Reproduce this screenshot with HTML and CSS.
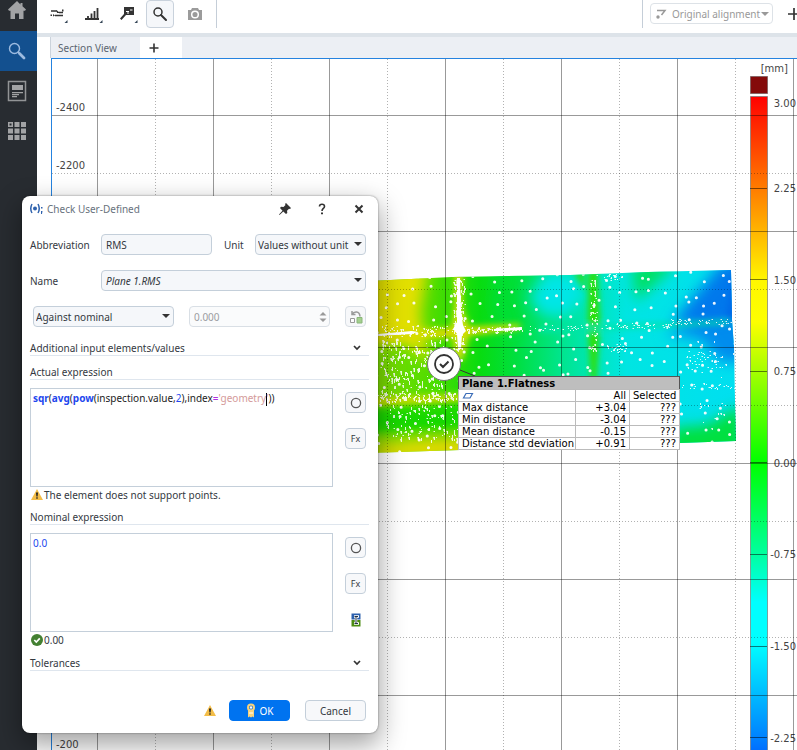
FILE: index.html
```html
<!DOCTYPE html>
<html lang="en">
<head>
<meta charset="utf-8">
<title>Section View</title>
<link rel="stylesheet" href="styles.css">
</head>
<body>
<div class="app">
  <nav class="rail" aria-label="Workspaces">
    <button class="rail-item rail-home" aria-label="Home"><svg width="20" height="20" viewBox="0 0 20 20"><path d="M10 1 1 9.500l1 1.200h1.500V19H8v-5.500h4V19h4.500v-8.300H18l1-1.200-3.500-3.300V3h-2v1.500z" fill="#a2a3a5"/></svg></button>
    <button class="rail-item rail-active" aria-label="Inspect"><svg width="18" height="18" viewBox="0 0 18 18" fill="none" stroke="#9dbbe0"><circle cx="6.500" cy="6.500" r="5" stroke-width="1.400"/><path d="m10 10 1.500 1.500" stroke-width="1.500"/><path d="m11.500 11.500 4.500 4.500" stroke-width="2.800" stroke-linecap="round"/></svg></button>
    <button class="rail-item" aria-label="Report"><svg width="20" height="22" viewBox="0 0 20 22"><path d="M1.500 1.500h17v19h-17z" fill="none" stroke="#929496" stroke-width="1.500"/><path d="M5 5h11v5H5zM5 12h11v1.200H5zM5 14h7v1.200H5zM5 16h5v1.200H5z" fill="#a2a3a5"/></svg></button>
    <button class="rail-item" aria-label="All apps"><svg width="20" height="20" viewBox="0 0 20 20" fill="#a2a3a5"><path d="M1 1h5v5H1zM7.500 1h5v5h-5zM14 1h5v5h-5zM1 7.500h5v5H1zM7.500 7.500h5v5h-5zM14 7.500h5v5h-5zM1 14h5v5H1zM7.500 14h5v5h-5zM14 14h5v5h-5z"/><path d="M2.500 2.500h2v2h-2z" fill="#282c31"/></svg></button>
  </nav>
  <main class="main">
    <header class="toolbar">
      <button class="tool" aria-label="Sections"><svg width="20" height="20" viewBox="0 0 20 20"><path d="M3 7h6M11 8.500h4M7 11.500h8" fill="none" stroke="#333" stroke-width="1.500"/><path d="M8.500 6l3.500 3h-3zM5 10l2 1.500-2 1z" fill="#333"/><path d="M2.500 10.500H4V12H2.500zM14 5.500h1.500v2H14z" fill="#333"/><path d="M19.500 16v3h-3z" fill="#345"/></svg></button>
      <button class="tool" aria-label="Levels"><svg width="20" height="20" viewBox="0 0 20 20"><path d="M2 15h14M5 15v-3M8.500 15V9.500M11.500 15V7M14.500 15V4" fill="none" stroke="#333" stroke-width="1.800"/><path d="M19.500 16v3h-3z" fill="#345"/></svg></button>
      <button class="tool" aria-label="Labels"><svg width="20" height="20" viewBox="0 0 20 20"><path d="M6 3h10v8H8l-4.500 5-1.500-1.500 4-4.500z" fill="#333"/><path d="M8 7.500h3M12 6h2.500M9 9h2" stroke="#fff"/><path d="M19.500 16v3h-3z" fill="#345"/></svg></button>
      <button class="tool tool-on" aria-label="Probe"><svg width="16" height="16" viewBox="0 0 16 16" fill="none" stroke="#333"><circle cx="6" cy="6" r="4" stroke-width="1.500"/><path d="m9 9 5 5" stroke-width="2" stroke-linecap="round"/></svg></button>
      <button class="tool tool-camera" aria-label="Snapshot"><svg width="16" height="14" viewBox="0 0 16 14"><path d="M1 3h3l1-2h6l1 2h3v10H1z" fill="#9b9b9b"/><circle cx="8" cy="7.500" r="3.300" fill="#9b9b9b" stroke="#fff" stroke-width="1.500"/></svg></button>
      <span class="rule"></span>
      <span class="spacer"></span>
      <span class="rule"></span>
      <label class="align"><svg width="12" height="12" viewBox="0 0 12 12"><path d="M2 2.500h8L6.500 7" fill="none" stroke="#999" stroke-width="1.500"/><circle cx="3" cy="9" r="1.700" fill="#999"/></svg><select class="align-select" aria-label="Alignment" disabled><option>Original alignment</option></select></label>
      <button class="add" aria-label="Add alignment"><svg width="12" height="12" viewBox="0 0 12 12"><path d="M6 0v12M0 6h12" stroke="#333" stroke-width="1.700"/></svg></button>
    </header>
    <div class="tabs">
      <button class="tab">Section View</button>
      <button class="tab tab-new" aria-label="New tab"><svg width="10" height="10" viewBox="0 0 10 10"><path d="M5 .500v9M.500 5h9" stroke="#333" stroke-width="1.600"/></svg></button>
    </div>
    <section class="view">
      <svg class="plot" width="100%" height="100%">
        <defs>
          <linearGradient id="scale" x1="0" y1="96" x2="0" y2="780" gradientUnits="userSpaceOnUse">
            <stop offset="0" stop-color="#f00"/><stop offset=".135" stop-color="#ff7c00"/><stop offset=".27" stop-color="#fff700"/><stop offset=".33" stop-color="#fdff00"/><stop offset=".44" stop-color="#78ff00"/><stop offset=".536" stop-color="#0f0"/><stop offset=".67" stop-color="#00ffa0"/><stop offset=".74" stop-color="#0ff"/><stop offset=".8" stop-color="#0ff"/><stop offset=".94" stop-color="#0080ff"/><stop offset="1" stop-color="#0040ff"/>
          </linearGradient>
          <linearGradient id="field" x1="370" x2="736" y1="0" y2="0" gradientUnits="userSpaceOnUse">
            <stop offset="0" stop-color="#86dc00"/><stop offset=".18" stop-color="#4add00"/><stop offset=".3" stop-color="#08dc10"/><stop offset=".4" stop-color="#00df40"/><stop offset=".52" stop-color="#00e58c"/><stop offset=".63" stop-color="#00e6c2"/><stop offset=".7" stop-color="#00e5e2"/><stop offset="1" stop-color="#00dff0"/>
          </linearGradient>
          <filter id="soft" x="-50%" y="-50%" width="200%" height="200%"><feGaussianBlur stdDeviation="7"/></filter>
          <filter id="fine" x="-100%" y="-50%" width="300%" height="200%"><feGaussianBlur stdDeviation="3"/></filter>
          <clipPath id="sheet"><path d="M370 281 452 277 570 275 648 272 731 270 732 320 734 347 735 400 736 441 680 443 560 447 460 450 370 453z"/></clipPath>
        </defs>
        <g transform="translate(-52 -59)">
          <g clip-path="url(#sheet)">
            <path d="M370 260h370v200H370z" fill="url(#field)"/>
            <g filter="url(#soft)">
              <path d="M360 265h68l-8 50 10 50-25-22-45 0z" fill="#e2e000"/>
              <path d="M365 405h95v30h-95z" fill="#14d800"/>
              <path d="M375 446l50-6 50-2v20H375z" fill="#f0d800"/>
              <path d="M545 272h25l18 20-20 24-25 0-14-18z" fill="#00e6e6"/>
              <path d="M500 265h18l-6 35 12 26-16 10-14-30z" fill="#00de30"/>
              <path d="M632 262h46l-42 40z" fill="#00e060"/>
              <path d="M745 262h-22l-52 62 24 0h60z" fill="#0078ec"/>
              <path d="M745 322h-35l-48 12 40 6 18 22h30z" fill="#008cee"/>
              <path d="M672 428l35-3 35-20v60h-72z" fill="#00e040"/>
            </g>
            <g filter="url(#fine)">
              <path d="M735 268h10v52h-20z" fill="#006ae8"/>
              <path d="M454 270h9v40l8 20-8 30h-8l-4-30 3-25z" fill="#c8e010"/>
              <path d="M365 333l95-6 60-3v5l-60 8-95 5z" fill="#d8dc00"/>
              <path d="M365 398l100-4v7l-100 5z" fill="#d4dc00"/>
              <path d="M575 272h8l2 20zM589 270h8l3 52-4 60h-5l-3-58z" fill="#30df00"/>
              <path d="M540 326h50l140-6v4l-190 9z" fill="#00e4a8"/>
            </g>
            <g fill="#fff">
              <path d="M457 278h3l1 33 2 14 3 6-4 4-1 14h-3l-1-15-4-5 4-7z"/>
              <path d="M378 334l34-3 6 1-6 2-34 2zM494 329l28-2v3l-28 1z"/>
            </g>
            <path id="speckle" fill="#fff" fill-opacity=".85"/>
            <path id="dots" fill="none" stroke="#fff" stroke-width="3" stroke-linecap="round" stroke-opacity=".92"/>
          </g>
        </g>
        <svg x="100%" overflow="visible"><g transform="translate(-797 -59)">
          <path d="M750.500 76.500h17v17h-17z" fill="#840a0a" stroke="#866"/>
          <path d="M750.500 96.500h17V1200h-17z" fill="url(#scale)" stroke="#777" stroke-opacity=".7"/>
          <path d="M750 188.500h17M750 279.500h17M750 371.500h17M750 462.500h17M750 554.500h17M750 646.500h17M750 737.500h17" stroke="#000" stroke-opacity=".5"/>
          <g class="axis" text-anchor="end">
            <text x="788" y="72">[mm]</text>
            <text x="796" y="107">3.00</text><text x="796" y="192">2.25</text><text x="796" y="284">1.50</text><text x="796" y="375">0.75</text><text x="796" y="467">0.00</text><text x="796" y="558">-0.75</text><text x="796" y="650">-1.50</text><text x="796" y="742">-2.25</text>
          </g>
        </g></svg>
        <g transform="translate(-52 -59)">
          <path id="major" stroke="#000" stroke-opacity=".4" fill="none"/>
          <path id="minor" stroke="#000" stroke-opacity=".3" stroke-dasharray="1 2" fill="none"/>
          <g class="axis"><text x="56" y="111">-2400</text><text x="56" y="169">-2200</text><text x="56" y="748">-200</text></g>
          <path d="M460 370 475 376" stroke="#333"/>
          <circle cx="444" cy="364" r="16.500" fill="#fff" stroke="#777"/>
          <circle cx="444" cy="364" r="9" fill="none" stroke="#333" stroke-width="1.800"/>
          <path d="m440 364 3 3 5.500-5.500" fill="none" stroke="#333" stroke-width="2"/>
        </g>
      </svg>
      <table class="flat">
        <colgroup><col class="col-name"><col class="col-all"><col></colgroup>
        <thead>
          <tr><th class="flat-title" colspan="3">Plane 1.Flatness</th></tr>
          <tr><td><svg width="12" height="8" viewBox="0 0 12 8"><path d="M4 1.500h6.500L8 6H1.500z" fill="none" stroke="#3b6db8" stroke-width="1.200"/></svg></td><td>All</td><td>Selected</td></tr>
        </thead>
        <tbody>
          <tr><td>Max distance</td><td>+3.04</td><td>???</td></tr>
          <tr><td>Min distance</td><td>-3.04</td><td>???</td></tr>
          <tr><td>Mean distance</td><td>-0.15</td><td>???</td></tr>
          <tr><td>Distance std deviation</td><td>+0.91</td><td>???</td></tr>
        </tbody>
      </table>
    </section>
  </main>
</div>

<form class="dialog" role="dialog" aria-labelledby="dlg-title">
  <header class="dlg-head">
    <svg width="14" height="12" viewBox="0 0 14 12"><path d="M3 1Q.500 5.500 3 10M9 1q2.500 4.500 0 9" fill="none" stroke="#2f62ad" stroke-width="1.500"/><circle cx="6" cy="5.500" r="2" fill="#2f62ad"/><path d="M12 4h1.500v1.500H12zM12 8h1.500l-.5 3h-1z" fill="#2f62ad"/></svg>
    <h1 class="dlg-title" id="dlg-title">Check User-Defined</h1>
    <button class="head-btn" type="button" aria-label="Pin"><svg width="14" height="14" viewBox="0 0 14 14"><path d="M8 1l5 5-1 1-1-.3-2 2 .3 2.300L8 12 5.300 9.500 1.500 13 1 12.500 4.500 8.700 2 6l1-1.300 2.500.3 2-2L7 2z" fill="#333"/></svg></button>
    <button class="head-btn" type="button" aria-label="Help"><svg width="10" height="12" viewBox="0 0 10 12"><path d="M2.500 3.500C2.500.500 7.500.500 7.500 3.500 7.500 5.500 5 5.500 5 8" fill="none" stroke="#333" stroke-width="1.600"/><path d="M4 9.500h2v1.800H4z" fill="#333"/></svg></button>
    <button class="head-btn" type="button" aria-label="Close"><svg width="10" height="10" viewBox="0 0 10 10"><path d="m1.500 1.500 7 7m0-7-7 7" stroke="#333" stroke-width="2"/></svg></button>
  </header>

  <div class="row">
    <label class="lead" for="abbr">Abbreviation</label>
    <input class="field abbr" id="abbr" value="RMS">
    <label class="unit-label" for="unit">Unit</label>
    <span class="pick grow"><select class="field tight" id="unit"><option>Values without unit</option></select></span>
  </div>
  <div class="row">
    <label class="lead" for="name">Name</label>
    <span class="pick grow"><select class="field name" id="name"><option>Plane 1.RMS</option></select></span>
  </div>
  <div class="row row-nominal">
    <span class="pick mode"><select class="field tight" aria-label="Comparison"><option>Against nominal</option></select></span>
    <span class="spin grow"><input class="field" aria-label="Nominal value" value="0.000" disabled><svg class="spin-arrows" width="8" height="12" viewBox="0 0 8 12"><path d="M4 1l3.500 3.500h-7zM4 11 .5 7.500h7z" fill="#999"/></svg></span>
    <button class="square faint" type="button" aria-label="Swap"><svg width="14" height="14" viewBox="0 0 14 14"><path d="M3 1v3.500h3.500M3 4.500C5 1 10.500 .500 11 6.500" fill="none" stroke="#999" stroke-width="1.500"/><path d="M1.500 8.500h4v4h-4z" fill="#fff" stroke="#999"/><path d="M8 7.500h5v5.500H8z" fill="#a4d08e" stroke="#8ab67a"/></svg></button>
  </div>

  <button class="fold fold-extra" type="button"><span>Additional input elements/values</span><svg width="8" height="6" viewBox="0 0 8 6"><path d="m1 1 3 3 3-3" fill="none" stroke="#333" stroke-width="1.700"/></svg></button>

  <h2 class="heading" id="actual-h">Actual expression</h2>
  <div class="expr">
    <div class="code" contenteditable="true" role="textbox" aria-multiline="true" aria-labelledby="actual-h" spellcheck="false"><b class="fn">sqr</b>(<b class="fn">avg</b>(<b class="fn">pow</b>(inspection.value,<span class="num">2</span>),index<span class="op">=</span><span class="str">'geometry<span class="caret"></span>'</span>))</div>
    <div class="side">
      <button class="square" type="button" aria-label="Element"><svg width="12" height="12" viewBox="0 0 12 12"><circle cx="6" cy="6" r="4.600" fill="none" stroke="#555" stroke-width="1.300"/></svg></button>
      <button class="square fx" type="button">Fx</button>
    </div>
  </div>
  <p class="note"><svg width="12" height="11" viewBox="0 0 12 11"><path d="M6 0l6 11H0z" fill="#f3bd48"/><path d="M5 3.500h2L6.600 7.500H5.400zM5.300 8.300h1.400v1.400H5.300z" fill="#222"/></svg>The element does not support points.</p>

  <h2 class="heading" id="nominal-h">Nominal expression</h2>
  <div class="expr">
    <textarea class="code num" aria-labelledby="nominal-h">0.0</textarea>
    <div class="side">
      <button class="square" type="button" aria-label="Element"><svg width="12" height="12" viewBox="0 0 12 12"><circle cx="6" cy="6" r="4.600" fill="none" stroke="#555" stroke-width="1.300"/></svg></button>
      <button class="square fx" type="button">Fx</button>
      <button class="square bare" type="button" aria-label="Link nominal and actual"><svg width="10" height="14" viewBox="0 0 10 14"><path d="M.500.500h9v6h-9z" fill="#2c61ad"/><path d="M.500 7h9v6.500h-9z" fill="#4c8c12"/><path d="M3 3.500h5M5 3.500v7M3 10.500h5" stroke="#fff" stroke-width="2.500"/><path d="M3.500 3.500h3.500M5 3.500v7M3.500 10.500h3.500" stroke="#234"/></svg></button>
    </div>
  </div>
  <p class="note"><svg width="12" height="12" viewBox="0 0 12 12"><circle cx="6" cy="6" r="6" fill="#438032"/><path d="m3.300 6 2 2 3.500-3.700" fill="none" stroke="#fff" stroke-width="1.700"/></svg>0.00</p>

  <button class="fold fold-tol" type="button"><span>Tolerances</span><svg width="8" height="6" viewBox="0 0 8 6"><path d="m1 1 3 3 3-3" fill="none" stroke="#333" stroke-width="1.700"/></svg></button>

  <footer class="actions">
    <svg width="12" height="11" viewBox="0 0 12 11"><path d="M6 0l6 11H0z" fill="#f3bd48"/><path d="M5 3.500h2L6.600 7.500H5.400zM5.300 8.300h1.400v1.400H5.300z" fill="#222"/></svg>
    <button class="btn btn-ok" type="submit"><svg width="10" height="15" viewBox="0 0 10 15"><path d="M2 7h6v7.500l-1.500-1-1.500 1-1.500-1-1.500 1z" fill="#f6d27c"/><circle cx="5" cy="4.500" r="3" fill="#1c6fd0" stroke="#f6d27c" stroke-width="2"/><circle cx="5" cy="4.500" r="1.200" fill="#fff"/><path d="M3 10h4" stroke="#fff"/></svg>OK</button>
    <button class="btn" type="button">Cancel</button>
  </footer>
</form>
<script src="plot.js"></script>
</body>
</html>
```
FILE: styles.css
```css
* { box-sizing: border-box; }
body { margin: 0; font: 10px/14px "Noto Sans", "Open Sans", sans-serif; color: #34393f; background: #fff; overflow: hidden; }
button, input, select, textarea { font: inherit; color: inherit; margin: 0; }
button { padding: 0; border: 0; background: none; }
svg { display: block; flex: none; }

.app { display: flex; height: 100vh; }
.rail { width: 37px; flex: none; background: #282c31; display: flex; flex-direction: column; }
.rail-item { height: 40px; display: flex; align-items: center; justify-content: center; padding-right: 4px; }
.rail-home { height: 31px; align-items: flex-start; }
.rail-active { background: #13508f; }

.main { flex: 1; min-width: 0; display: flex; flex-direction: column; }
.toolbar { height: 37px; flex: none; border-bottom: 4px solid #dde3e9; display: flex; align-items: flex-start; padding-left: 7px; }
.tool { width: 27px; height: 28px; margin-right: 8px; display: flex; align-items: center; justify-content: center; }
.tool-on { width: 28px; margin: 0 0 0 -3px; border: 1px solid #c9d2dc; border-radius: 4px; background: #f5f7fa; }
.tool-camera { width: 42px; margin-right: 0; }
.rule { width: 1px; height: 28px; background: #c5ced8; }
.spacer { flex: 1; }
.align { display: flex; align-items: center; height: 21px; width: 123px; margin: 3px 15px 0 7px; padding: 0 4px; gap: 5px; border: 1px solid #dde2e7; border-radius: 4px; position: relative; }
.align-select { flex: 1; min-width: 0; padding: 0; border: 0; background: none; appearance: none; color: #999; opacity: 1; }
.align::after, .pick::after { content: ""; position: absolute; right: 4px; top: 8px; border: 4px solid transparent; border-top-color: #333; border-bottom: 0; }
.align::after { right: 3px; border-top-color: #999; }
.add { width: 9px; height: 28px; display: flex; align-items: center; overflow: hidden; }

.tabs { height: 21px; flex: none; margin-left: 13px; display: flex; background: #eceff4; border-left: 1px solid #cbd3dc; }
.tab { width: 89px; padding-left: 7px; text-align: left; color: #5b6570; }
.tab-new { width: 42px; background: #fff; display: flex; align-items: center; padding-left: 9px; }
.view { flex: 1; min-height: 0; margin-left: 14px; border: solid #2583df; border-width: 1px 0 0 1px; position: relative; overflow: hidden; }
.axis { font: 10px "DejaVu Sans", sans-serif; fill: #444; }

.flat { position: absolute; left: 406px; top: 317px; width: 222px; table-layout: fixed; border: 1px solid #555; border-collapse: collapse; background: #fff; color: #000; font: 10px/10px "DejaVu Sans", sans-serif; white-space: nowrap; }
.col-name { width: 117px; }
.col-all { width: 54px; }
.flat td { padding: 1px 3px 0; height: 12px; border: 1px solid #bbb; text-align: right; }
.flat td:first-child { padding-right: 0; text-align: left; }
.flat-title { padding: 1px 3px 0; height: 13px; background: #bebebe; text-align: left; }

.dialog { position: absolute; left: 22px; top: 196px; width: 356px; padding: 0 8px 12px; background: #fff; border-radius: 8px; box-shadow: 0 0 2px rgba(0,0,0,.5), 0 10px 26px 2px rgba(0,0,0,.36); }
.dlg-head { display: flex; align-items: center; height: 26px; margin: 0 4px 12px -1px; }
.dlg-head > svg { margin-right: 4px; }
.dlg-title { flex: 1; margin: 0; font-size: 10px; font-weight: 400; color: #68727d; }
.head-btn { width: 14px; margin-left: 23px; display: flex; justify-content: center; }

.row { display: flex; align-items: center; height: 21px; margin: 0 4px 15px 0; }
.row-nominal { padding-left: 3px; margin-bottom: 14px; }
.lead { width: 71px; }
.field { display: block; width: 100%; height: 21px; padding: 0 4px; border: 1px solid #c4cfda; border-radius: 4px; background: #f5f7fa; appearance: none; }
.field:disabled { background: #fafbfc; color: #9a9da1; border-color: #d9dfe5; opacity: 1; }
.tight { padding-left: 2px; }
.name { font-style: italic; }
.abbr { width: 111px; }
.unit-label { width: 43px; padding-left: 12px; }
.pick, .spin { position: relative; }
.grow { flex: 1; }
.mode { width: 141px; margin-right: 15px; }
.spin-arrows { position: absolute; right: 3px; top: 5px; }
.square { width: 21px; height: 21px; border: 1px solid #c4cfda; border-radius: 4px; background: #f7f8fa; display: flex; align-items: center; justify-content: center; }
.faint { margin-left: 15px; border-color: #d9dfe5; }
.fx { font-size: 9px; }
.bare { border: 0; background: none; }

.fold { display: flex; align-items: center; justify-content: space-between; width: 339px; height: 15px; padding-right: 8px; border-bottom: 1px solid #dfe6ee; }
.fold-extra { margin-bottom: 9px; }
.fold-tol { margin-top: 9px; }
.heading { width: 339px; margin: 0 0 8px; height: 15px; font-size: 10px; font-weight: 400; border-bottom: 1px solid #dfe6ee; }
.expr { display: flex; gap: 12px; }
.code { width: 303px; height: 99px; padding: 2px; border: 1px solid #c4cfda; background: #fff; color: #222; resize: none; outline: 0; }
.fn, .code .num, .code.num { color: #2347ee; }
.op { color: #b030e0; }
.str { color: #d49a9a; }
.caret { display: inline-block; width: 1px; height: 13px; margin-right: -1px; background: #000; vertical-align: middle; }
.side { display: flex; flex-direction: column; gap: 15px; padding-top: 4px; }
.note { display: flex; align-items: center; gap: 1px; height: 15px; margin: 0 0 8px; padding-left: 1px; }
.actions { display: flex; align-items: center; justify-content: flex-end; margin: 29px 4px 0 0; }
.btn { width: 61px; height: 21px; margin-left: 15px; border: 1px solid #c4cfda; border-radius: 4px; background: #f7f8fa; display: flex; align-items: center; justify-content: center; gap: 4px; }
.btn-ok { margin-left: 13px; background: #0073f0; border-color: #0073f0; color: #fff; }
```
FILE: plot.js
```js
// Grid lines and measured-point speckle of the section plot.
let seed = 11;
const rnd = () => (seed = (seed * 16807) % 2147483647) / 2147483647;
const set = (id, d) => document.getElementById(id).setAttribute("d", d);

let major = "", minor = "";
for (let i = 0; i < 30; i++) {
  major += `M${97.5 + i * 116} 59V2000M52 ${115.5 + i * 116}H3500`;
  minor += `M${155.5 + i * 116} 59V2000M52 ${173.5 + i * 116}H3500`;
}
set("major", major);
set("minor", minor);

// Reference points on a jittered lattice.
let dots = "";
for (let y = 278; y < 452; y += 14)
  for (let x = 381; x < 736; x += 16)
    dots += `M${(x + rnd() * 13 - 6).toFixed(1)} ${(y + rnd() * 12 - 6).toFixed(1)}h.1`;
set("dots", dots);

// Missing data: [x, y, width, height, count, longest streak]
const gaps = [
  [380, 325, 75, 12, 80, 2], [380, 340, 65, 55, 200, 4], [378, 393, 82, 8, 110, 3],
  [385, 405, 75, 35, 110, 3], [453, 278, 11, 72, 110, 3], [466, 327, 56, 5, 80, 2],
  [526, 325, 90, 5, 35, 1], [590, 274, 6, 80, 60, 2], [610, 323, 60, 5, 45, 1],
  [670, 319, 65, 5, 50, 1], [607, 343, 18, 9, 35, 1], [685, 350, 35, 18, 40, 1],
  [602, 274, 20, 6, 22, 1], [680, 384, 55, 4, 20, 1], [690, 340, 44, 95, 30, 2]
];
let speckle = "";
for (const [x, y, w, h, n, len] of gaps)
  for (let i = 0; i < n; i++)
    speckle += `M${Math.round(x + rnd() * w)} ${Math.round(y + rnd() * h)}h${1 + Math.round(rnd())}v${1 + Math.floor(rnd() * len)}h-1z`;
set("speckle", speckle);
```
